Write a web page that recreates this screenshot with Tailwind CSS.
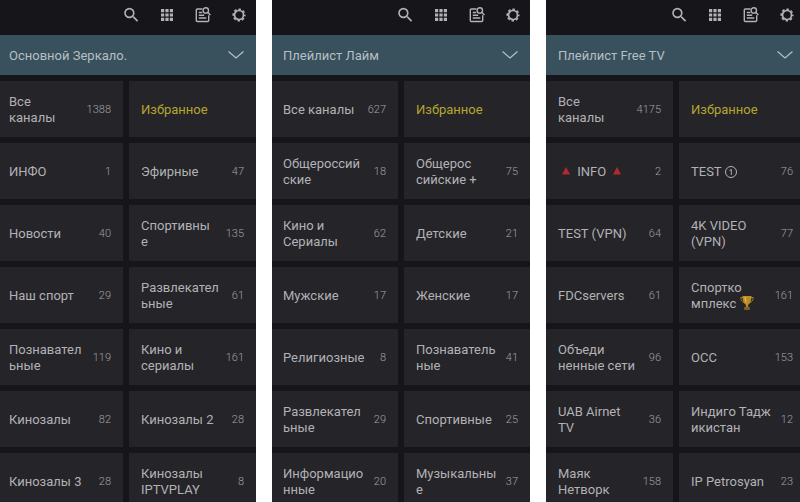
<!DOCTYPE html>
<html lang="ru">
<head>
    <meta charset="UTF-8">
    <meta name="viewport" content="width=device-width, initial-scale=1.0">
    <title>Плейлисты</title>
    <script src="https://cdn.jsdelivr.net/npm/@tailwindcss/browser@4"></script>
</head>
<body class="bg-white font-['Roboto','Noto_Sans',sans-serif] text-[13px] leading-4 text-[#b2b2b5]">
    <main class="grid h-screen grid-cols-[256fr_258fr_254fr] gap-4 overflow-hidden" id="panels">
        <!-- Panels will be inserted here -->
    </main>

    <script>
        // A "|" in a name is a line break
        const panels = [
            {
                title: 'Основной Зеркало.',
                cols: 'grid-cols-[123fr_127fr]',
                left: 'pl-[9px]',
                right: 'pr-3',
                tools: 'pr-[7px]',
                items: [
                    ['Все|каналы', '1388'], ['Избранное', ''],
                    ['ИНФО', '1'], ['Эфирные', '47'],
                    ['Новости', '40'], ['Спортивны|е', '135'],
                    ['Наш спорт', '29'], ['Развлекател|ьные', '61'],
                    ['Познавател|ьные', '119'], ['Кино и|сериалы', '161'],
                    ['Кинозалы', '82'], ['Кинозалы 2', '28'],
                    ['Кинозалы 3', '28'], ['Кинозалы|IPTVPLAY', '8']
                ]
            },
            {
                title: 'Плейлист Лайм',
                cols: 'grid-cols-[126fr_126fr]',
                left: 'pl-[11px]',
                right: 'pr-3',
                tools: 'pr-[7px]',
                items: [
                    ['Все каналы', '627'], ['Избранное', ''],
                    ['Общероссий|ские', '18'], ['Общерос|сийские +', '75'],
                    ['Кино и|Сериалы', '62'], ['Детские', '21'],
                    ['Мужские', '17'], ['Женские', '17'],
                    ['Религиозные', '8'], ['Познаватель|ные', '41'],
                    ['Развлекател|ьные', '29'], ['Спортивные', '25'],
                    ['Информацио|нные', '20'], ['Музыкальны|е', '37']
                ]
            },
            {
                title: 'Плейлист Free TV',
                cols: 'grid-cols-[127fr_121fr]',
                left: 'pl-3',
                right: 'pr-[7px]',
                tools: 'pr-[3px]',
                items: [
                    ['Все|каналы', '4175'], ['Избранное', ''],
                    ['{tri} INFO {tri}', '2'], ['TEST {one}', '76'],
                    ['TEST (VPN)', '64'], ['4K VIDEO|(VPN)', '77'],
                    ['FDCservers', '61'], ['Спортко|мплекс {cup}', '161'],
                    ['Объеди|ненные сети', '96'], ['ОСС', '153'],
                    ['UAB Airnet|TV', '36'], ['Индиго Тадж|икистан', '12'],
                    ['Маяк|Нетворк', '158'], ['IP Petrosyan', '23']
                ]
            }
        ];

        const icons = {
            tri: '<svg class="mx-0.5 inline-block size-3 align-[-1px]" viewBox="0 0 12 12" fill="#b02a2e"><path d="M6 2 10 9.500H2z"/></svg>',
            one: '<svg class="inline-block size-3 align-[-2px]" viewBox="0 0 12 12" fill="none" stroke="#b2b2b5"><circle cx="6" cy="6" r="5.500"/><path d="M4.500 4.500 6.300 3.500V9"/></svg>',
            cup: '<svg class="inline-block h-4 w-3.5 -my-1 align-[1px]" viewBox="0 0 14 16"><path d="M3 2.500H.8C.8 5.500 2 7 4.500 7.500M11 2.500h2.200c0 3-1.200 4.500-3.700 5" fill="none" stroke="#a87a1e"/><path d="M2.500 1h9c0 4.500-1 7.500-3.400 8.700V12H5.900V9.700C3.500 8.500 2.500 5.500 2.500 1z" fill="#bd8c22"/><path d="M4.500 2h1.300c0 3 .2 4.500 1 6.300C5.200 7 4.500 5 4.500 2z" fill="#e3c265"/><path d="M4.200 12h5.600v3H4.200z" fill="#80601f"/></svg>'
        };

        const tools = `
            <button aria-label="Поиск">
                <svg class="size-5" viewBox="-1 -.5 25 25" fill="currentColor"><path d="M15.500 14h-.79l-.28-.27A6.471 6.471 0 0 0 16 9.500 6.500 6.500 0 1 0 9.500 16c1.610 0 3.090-.59 4.230-1.570l.27.28v.79l5 4.990L20.490 19l-4.990-5zm-6 0C7.010 14 5 11.990 5 9.500S7.010 5 9.500 5 14 7.010 14 9.500 11.990 14 9.500 14z"/></svg>
            </button>
            <button aria-label="Сетка">
                <svg class="size-5" viewBox="0 0 20 20" fill="currentColor"><path d="M4 4h3.200v3.200H4zM8.400 4h3.200v3.200H8.400zM12.800 4H16v3.200h-3.200zM4 8.400h3.200v3.200H4zM8.400 8.400h3.200v3.200H8.400zM12.800 8.400H16v3.200h-3.200zM4 12.800h3.200V16H4zM8.400 12.800h3.200V16H8.400zM12.800 12.800H16V16h-3.200z"/></svg>
            </button>
            <button aria-label="Телепрограмма">
                <svg class="size-5" viewBox="0 0 20 20" fill="none" stroke="currentColor" stroke-width="1.400"><path d="M9.500 4H4.300a1 1 0 0 0-1 1v10.500a1 1 0 0 0 1 1h10.400a1 1 0 0 0 1-1v-5.300M5.800 7.500h3.400M5.800 10.200h5.400M5.800 13h7.500"/><circle cx="12.800" cy="5.400" r="2.700"/><path d="m14.700 7.300 2.700 2.700"/></svg>
            </button>
            <button aria-label="Настройки">
                <svg class="size-5" viewBox="0 0 20 20" fill="none" stroke="currentColor"><circle cx="10" cy="10" r="4.500" stroke-width="1.700"/><circle cx="10" cy="10" r="5.800" stroke-width="1.500" stroke-dasharray="2.600 1.955" stroke-dashoffset="1.300"/></svg>
            </button>
        `;

        function formatName(name) {
            return name
                .replace('|', '<br>')
                .replace(/\{(\w+)\}/g, (_, key) => icons[key]);
        }

        function createTile([name, count], index, panel) {
            const left = index % 2 === 0;
            const color = name === 'Избранное' ? 'text-[#b5a62f]' : '';
            return `
                <button class="flex h-14 items-center justify-between bg-[#252429] pt-0.5 text-left ${left ? panel.left : 'pl-3'} ${left ? 'pr-3' : panel.right}">
                    <span class="whitespace-nowrap ${color}">${formatName(name)}</span>
                    <span class="text-[11px] font-light text-[#a0a0a4]">${count}</span>
                </button>
            `;
        }

        function createPanel(panel) {
            const section = document.createElement('section');
            section.className = 'min-w-0 bg-[#16151a]';
            section.innerHTML = `
                <header class="flex h-[35px] items-center justify-end gap-4 pb-1.5 text-[#b2b2b5] ${panel.tools}">${tools}</header>
                <div class="flex h-10 items-center bg-[#38515c] ${panel.left} ${panel.right}">
                    <select aria-label="Плейлист" class="h-full min-w-0 flex-1 appearance-none bg-transparent pt-0.5 text-[#b5bfc4]">
                        <option>${panel.title}</option>
                    </select>
                    <svg class="h-2 w-4 shrink-0" viewBox="0 0 16 8" fill="none" stroke="#b5bfc4" stroke-width="1.200"><path d="m.5.5 7.500 6.500L15.500.5"/></svg>
                </div>
                <div class="mt-1.5 grid gap-1.5 ${panel.cols}">
                    ${panel.items.map((item, i) => createTile(item, i, panel)).join('')}
                </div>
            `;
            return section;
        }

        const container = document.getElementById('panels');
        panels.forEach(panel => container.appendChild(createPanel(panel)));
    </script>
</body>
</html>
